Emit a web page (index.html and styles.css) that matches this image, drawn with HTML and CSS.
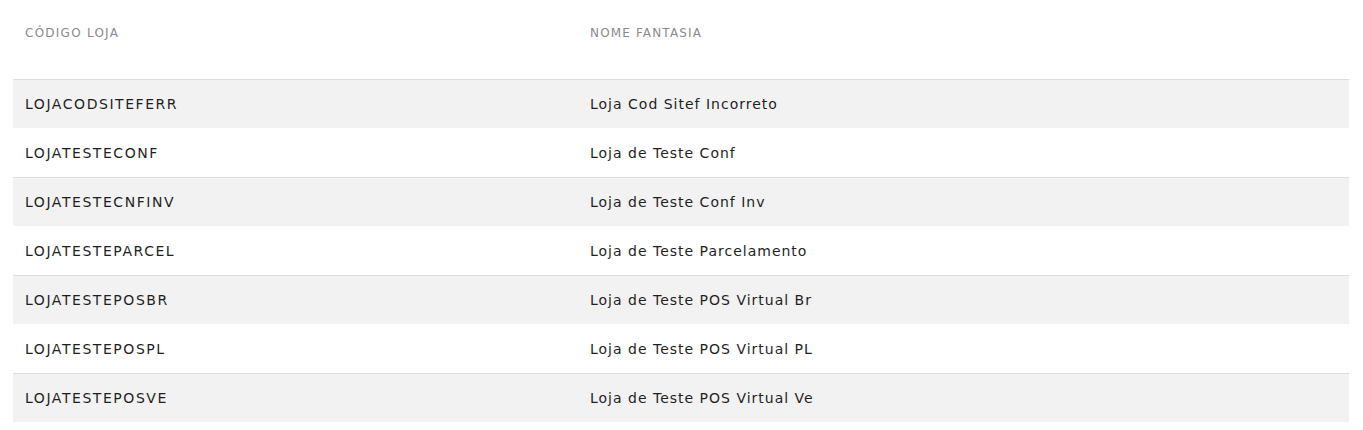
FILE: index.html
```html
<!DOCTYPE html>
<html lang="pt">
<head>
<meta charset="utf-8">
<link rel="stylesheet" href="styles.css">
</head>
<body>
<div class="page">
  <table class="lojas">
    <colgroup>
      <col class="col-a">
      <col class="col-b">
    </colgroup>
    <thead>
      <tr>
        <th class="col-codigo">Código Loja</th>
        <th class="col-nome">Nome Fantasia</th>
      </tr>
    </thead>
    <tbody>
      <tr class="odd"><td class="code">LOJACODSITEFERR</td><td class="name">Loja Cod Sitef Incorreto</td></tr>
      <tr class="even"><td class="code">LOJATESTECONF</td><td class="name">Loja de Teste Conf</td></tr>
      <tr class="odd"><td class="code">LOJATESTECNFINV</td><td class="name">Loja de Teste Conf Inv</td></tr>
      <tr class="even"><td class="code">LOJATESTEPARCEL</td><td class="name">Loja de Teste Parcelamento</td></tr>
      <tr class="odd"><td class="code">LOJATESTEPOSBR</td><td class="name">Loja de Teste POS Virtual Br</td></tr>
      <tr class="even"><td class="code">LOJATESTEPOSPL</td><td class="name">Loja de Teste POS Virtual PL</td></tr>
      <tr class="odd"><td class="code">LOJATESTEPOSVE</td><td class="name">Loja de Teste POS Virtual Ve</td></tr>
    </tbody>
  </table>
</div>
</body>
</html>
```
FILE: styles.css
```css
html, body {
  margin: 0;
  padding: 0;
  background: #fff;
}
body {
  font-family: "DejaVu Sans", "Noto Sans", sans-serif;
  color: #222;
}
.page {
  padding: 0 14px 0 13px;
}
.lojas {
  width: 100%;
  border-collapse: collapse;
  table-layout: fixed;
}
.lojas col.col-a {
  width: 565px;
}
.lojas th {
  height: 65px;
  padding: 0 12px 14px;
  text-align: left;
  vertical-align: middle;
  font-weight: 400;
  font-size: 12px;
  text-transform: uppercase;
  color: #8a8a8a;
  letter-spacing: 1.25px;
}
.lojas th.col-nome {
  letter-spacing: 1.15px;
}
.lojas td {
  height: 48px;
  padding: 0 12px;
  font-size: 14px;
  color: #1f1f1f;
  vertical-align: middle;
}
.lojas td.code {
  letter-spacing: 1.55px;
}
.lojas td.name {
  letter-spacing: 1px;
}
.lojas tr.odd td {
  background: #f2f2f2;
  border-top: 1px solid #dddddd;
}
.lojas tr.even td {
  background: #fff;
  border-top: 1px solid #fff;
}
```
